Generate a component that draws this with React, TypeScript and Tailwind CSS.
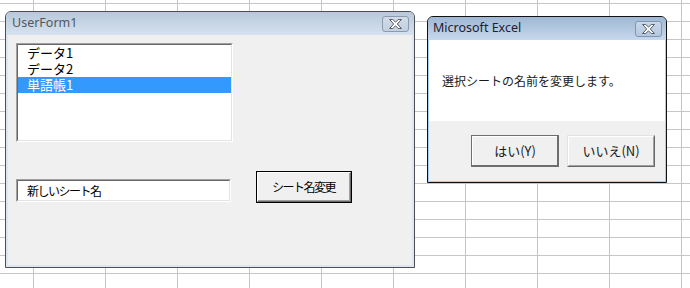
import React from 'react';

const jp = "font-['Noto_Sans_CJK_JP','Noto_Sans',sans-serif]";
const ui = "font-['Noto_Sans','Noto_Sans_CJK_JP',sans-serif]";

function CloseButton({ active }: { active?: boolean }) {
  return (
    <div
      className={
        'flex h-[16px] w-[27px] items-center justify-center rounded-[3px] border ' +
        (active
          ? 'border-[#8296b2] bg-gradient-to-b from-[#c9d8ea] to-[#b3c8e0]'
          : 'border-[#8c9ab0] bg-gradient-to-b from-[#d2dce8] to-[#c3d0e0]')
      }
    >
      <svg width="13" height="10" viewBox="-0.5 -0.5 14 11">
        <polygon
          points="0,0 3.5,0 6.5,3 9.5,0 13,0 8.5,5 13,10 9.5,10 6.5,7 3.5,10 0,10 4.5,5"
          fill="#ffffff"
          stroke="#454d58"
          strokeWidth="1"
          strokeLinejoin="round"
        />
      </svg>
    </div>
  );
}

function Sunken({ className, children }: { className: string; children: React.ReactNode }) {
  return (
    <div className={'border border-t-[#a0a0a0] border-l-[#a0a0a0] border-r-[#ffffff] border-b-[#ffffff] ' + className}>
      <div className="h-full w-full border border-t-[#696969] border-l-[#696969] border-r-[#e3e3e3] border-b-[#e3e3e3] bg-white">
        {children}
      </div>
    </div>
  );
}

function UserForm() {
  const items = ['データ1', 'データ2', '単語帳1'];
  return (
    <div className="absolute left-[5px] top-[11px] flex h-[257px] w-[410px] flex-col rounded-t-[6px] border border-[#4c4f55] bg-[#dfe6ef]">
      <div className="flex h-[23px] items-center justify-between rounded-t-[5px] bg-gradient-to-b from-[#b8c8da] to-[#d6e2ef] pl-[6px] pr-[5px]">
        <span className={ui + ' text-[12.5px] text-[#505860]'}>UserForm1</span>
        <CloseButton />
      </div>
      <div className="mx-[2px] mb-[2px] flex flex-1 flex-col bg-[#f0f0f0] pl-[8px] pt-[8px]">
        <Sunken className="h-[99px] w-[217px]">
          <div className={jp + ' text-[13px] leading-[16px] text-black'}>
            {items.map((t, i) => (
              <div key={t} className={'h-[16px] pl-[9px] ' + (i === 2 ? 'bg-[#3399ff] text-white' : '')}>
                {t}
              </div>
            ))}
          </div>
        </Sunken>
        <div className="mt-[29px] flex items-end gap-[25px]">
          <Sunken className="mb-[1px] h-[23px] w-[215px]">
            <div className={jp + ' pl-[9px] text-[12px] leading-[19px] tracking-[-1.5px] text-black'}>
              新しいシート名
            </div>
          </Sunken>
          <div className="h-[32px] w-[96px] border border-black">
            <div className="h-full w-full border border-t-white border-l-white border-r-[#696969] border-b-[#696969]">
              <div
                className={
                  jp +
                  ' flex h-full w-full items-center justify-center border-r border-b border-r-[#a0a0a0] border-b-[#a0a0a0] bg-[#f0f0f0] text-[12px] tracking-[-1.5px] text-black'
                }
              >
                シート名変更
              </div>
            </div>
          </div>
        </div>
      </div>
    </div>
  );
}

function MsgBox() {
  return (
    <div className="absolute left-[427px] top-[16px] flex h-[167px] w-[240px] flex-col rounded-t-[6px] border border-[#111] bg-[#a9cdee]">
      <div className="flex h-[23px] items-center justify-between rounded-t-[5px] bg-gradient-to-b from-[#9fb7d4] to-[#c6d9ed] pl-[5px] pr-[4px]">
        <span className={ui + ' text-[12.5px] text-[#1c2030]'}>Microsoft Excel</span>
        <CloseButton active />
      </div>
      <div className="mx-[1px] mb-[1px] flex flex-1 flex-col">
        <div className={jp + ' flex h-[81px] items-center bg-white pl-[13px] text-[12px] text-[#1a1a1a]'}>
          選択シートの名前を変更します。
        </div>
        <div className="flex flex-1 justify-end gap-[8px] bg-[#f0f0f0] pr-[10px] pt-[14px]">
          <div className="h-[32px] w-[88px] border border-r-2 border-b-2 border-[#6e6e6e]">
            <div className={jp + ' flex h-full w-full items-center justify-center border-t border-l border-white bg-[#f0f0f0] text-[13px] text-[#1a1a1a]'}>
              はい(Y)
            </div>
          </div>
          <div className="h-[32px] w-[88px] border border-t-[#e3e3e3] border-l-[#e3e3e3] border-r-[#696969] border-b-[#696969]">
            <div className={jp + ' flex h-full w-full items-center justify-center border border-t-white border-l-white border-r-[#a0a0a0] border-b-[#a0a0a0] bg-[#f0f0f0] text-[13px] text-[#1a1a1a]'}>
              いいえ(N)
            </div>
          </div>
        </div>
      </div>
    </div>
  );
}

export default function App() {
  return (
    <div className="relative h-[288px] w-[690px] overflow-hidden bg-white bg-[linear-gradient(to_right,#c6c6c6_1px,transparent_1px),linear-gradient(to_bottom,#c6c6c6_1px,transparent_1px)] bg-size-[72px_18px] bg-position-[33px_3px]">
      <UserForm />
      <MsgBox />
    </div>
  );
}
